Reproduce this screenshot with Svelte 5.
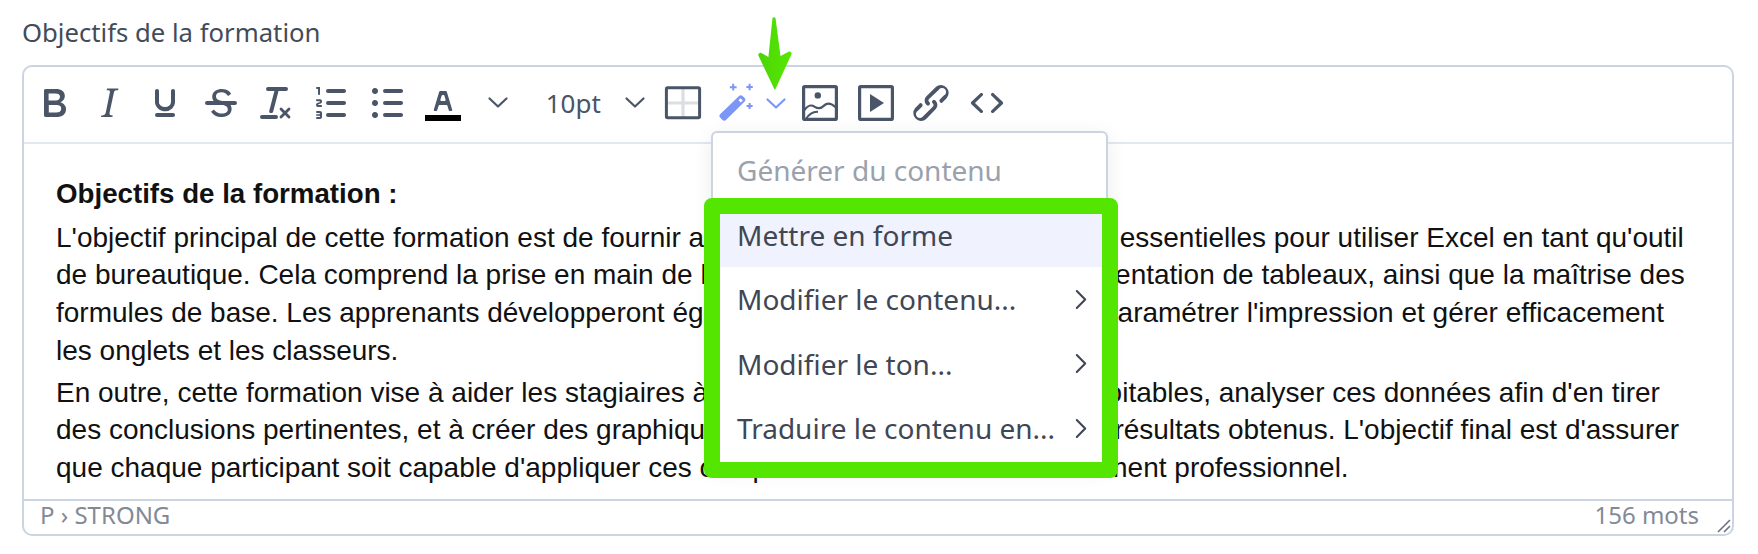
<script lang="ts">
	// icon paths on a 24 unit grid, shown at 48px like the editor's retina toolbar
	const icons: Record<string, string> = {
		bold: 'M7.8 19c-.3 0-.5 0-.6-.2l-.2-.5V5.7c0-.2 0-.4.2-.5l.6-.2h5c1.5 0 2.7.3 3.5 1 .7.6 1.1 1.4 1.1 2.5a3 3 0 0 1-.6 1.9c-.4.6-1 1-1.6 1.2.4.1.9.3 1.3.6s.8.7 1 1.2c.4.4.5 1 .5 1.6 0 1.3-.4 2.3-1.3 3-.8.7-2.1 1-3.8 1H7.8zm5-8.3c.6 0 1.2-.1 1.6-.5.4-.3.6-.7.6-1.3 0-1.1-.8-1.7-2.3-1.7H9.3v3.5h3.4zm.5 6c.7 0 1.3-.1 1.7-.4.4-.4.6-.9.6-1.5s-.2-1-.7-1.4c-.4-.3-1-.4-2-.4H9.4v3.8h4z',
		italic: 'M16.7 4.7l-.1.9h-.3c-.6 0-1 0-1.4.3-.3.3-.4.6-.5 1.1l-2.1 9.8v.6c0 .5.4.8 1.4.8h.2l-.2.8H8l.2-.8h.2c1.1 0 1.8-.5 2-1.5l2-9.8.1-.5c0-.6-.4-.8-1.4-.8h-.3l.2-.9h5.8z',
		underline: 'M16 5c.6 0 1 .4 1 1v5.5a4 4 0 0 1-.4 1.8l-1 1.4a5.3 5.3 0 0 1-5.5 1 5 5 0 0 1-1.6-1c-.5-.4-.8-.9-1.1-1.4a4 4 0 0 1-.4-1.8V6c0-.6.4-1 1-1s1 .4 1 1v5.5c0 .3 0 .6.2 1l.6.7a3.3 3.3 0 0 0 2.2.8 3.4 3.4 0 0 0 2.2-.8c.3-.2.4-.5.6-.8l.2-.9V6c0-.6.4-1 1-1zM8 17h8c.6 0 1 .4 1 1s-.4 1-1 1H8a1 1 0 0 1 0-2z',
		strike: 'M15.6 8.5c-.5-.7-1-1.1-1.3-1.3-.6-.4-1.3-.6-2-.6-2.7 0-2.8 1.7-2.8 2.1 0 1.6 1.8 2 3.2 2.3 4.4.9 4.6 2.8 4.6 3.9 0 1.4-.7 4.1-5 4.1A6.2 6.2 0 0 1 7 16.4l1.5-1.1c.4.6 1.6 2 3.7 2 1.6 0 2.5-.4 3-1.2.4-.8.3-2-.8-2.6-.7-.4-1.6-.7-2.9-1-1-.2-3.9-.8-3.9-3.6C7.6 6 10.3 5 12.4 5c2.9 0 4.2 1.6 4.7 2.4l-1.5 1.1zM5 11h14a1 1 0 0 1 0 2H5a1 1 0 0 1 0-2z',
		clear: 'M13.2 6a1 1 0 0 1 0 .2l-2.6 10a1 1 0 0 1-1 .8h-.2a.8.8 0 0 1-.8-1l2.6-10H8a1 1 0 1 1 0-2h9a1 1 0 0 1 0 2h-3.8zM5 18h7a1 1 0 0 1 0 2H5a1 1 0 0 1 0-2zm13 1.5L16.5 18 15 19.5a.7.7 0 0 1-1-1l1.5-1.5-1.5-1.5a.7.7 0 0 1 1-1l1.5 1.5 1.5-1.5a.7.7 0 0 1 1 1L17.5 17l1.5 1.5a.7.7 0 0 1-1 1z',
		ol: 'M10 17h8c.6 0 1 .4 1 1s-.4 1-1 1h-8a1 1 0 0 1 0-2zm0-6h8c.6 0 1 .4 1 1s-.4 1-1 1h-8a1 1 0 0 1 0-2zm0-6h8c.6 0 1 .4 1 1s-.4 1-1 1h-8a1 1 0 1 1 0-2zM6 4v3.5c0 .3-.2.5-.5.5a.5.5 0 0 1-.5-.5V5h-.5a.5.5 0 0 1 0-1H6zm-1 8.8l.2.2h1.3c.3 0 .5.2.5.5s-.2.5-.5.5H4.9a1 1 0 0 1-.9-1V13c0-.4.3-.8.6-1l1.2-.4.2-.3a.2.2 0 0 0-.2-.2H4.5a.5.5 0 0 1-.5-.5c0-.3.2-.5.5-.5h1.6c.5 0 .9.4.9 1v.1c0 .4-.3.8-.6 1l-1.2.4-.2.3zM7 17v2c0 .6-.4 1-1 1H4.5a.5.5 0 0 1 0-1h1.2c.2 0 .3-.1.3-.3 0-.2-.1-.3-.3-.3H4.4a.4.4 0 1 1 0-.8h1.3c.2 0 .3-.1.3-.3 0-.2-.1-.3-.3-.3H4.5a.5.5 0 1 1 0-1H6c.6 0 1 .4 1 1z',
		ul: 'M11 5h8c.6 0 1 .4 1 1s-.4 1-1 1h-8a1 1 0 0 1 0-2zm0 6h8c.6 0 1 .4 1 1s-.4 1-1 1h-8a1 1 0 0 1 0-2zm0 6h8c.6 0 1 .4 1 1s-.4 1-1 1h-8a1 1 0 0 1 0-2zM4.5 6c0-.4.1-.8.4-1 .3-.4.7-.5 1.1-.5.4 0 .8.1 1 .4.4.3.5.7.5 1.1 0 .4-.1.8-.4 1-.3.4-.7.5-1.1.5-.4 0-.8-.1-1-.4-.4-.3-.5-.7-.5-1.1zm0 6c0-.4.1-.8.4-1 .3-.4.7-.5 1.1-.5.4 0 .8.1 1 .4.4.3.5.7.5 1.1 0 .4-.1.8-.4 1-.3.4-.7.5-1.1.5-.4 0-.8-.1-1-.4-.4-.3-.5-.7-.5-1.1zm0 6c0-.4.1-.8.4-1 .3-.4.7-.5 1.1-.5.4 0 .8.1 1 .4.4.3.5.7.5 1.1 0 .4-.1.8-.4 1-.3.4-.7.5-1.1.5-.4 0-.8-.1-1-.4-.4-.3-.5-.7-.5-1.1z',
		color: 'M8.7 16h-.8a.5.5 0 0 1-.5-.6l2.7-9c.1-.3.3-.4.5-.4h2.8c.2 0 .4.1.5.4l2.7 9a.5.5 0 0 1-.5.6h-.8a.5.5 0 0 1-.4-.4l-.7-2.2c0-.3-.3-.4-.5-.4h-3.4c-.2 0-.4.1-.5.4l-.7 2.2c0 .3-.2.4-.4.4zm2.6-7.6l-.6 2a.5.5 0 0 0 .5.6h1.6a.5.5 0 0 0 .5-.6l-.6-2c0-.3-.3-.4-.5-.4h-.4c-.2 0-.4.1-.5.4z',
		link: 'M6.2 12.3a1 1 0 0 1 1.4 1.4l-2 2a2 2 0 1 0 2.6 2.8l4.8-4.8a1 1 0 0 0 0-1.4 1 1 0 1 1 1.4-1.3 2.9 2.9 0 0 1 0 4L9.6 20a3.9 3.9 0 0 1-5.5-5.5l2-2zm11.6-.6a1 1 0 0 1-1.4-1.4l2-2a2 2 0 1 0-2.6-2.8L11 10a1 1 0 0 0 0 1.4 1 1 0 1 1-1.4 1.3 2.9 2.9 0 0 1 0-4L14.4 4a3.9 3.9 0 0 1 5.5 5.5l-2 2z',
		code: 'M9.8 15.7c.3.3.3.8 0 1-.3.4-.9.4-1.2 0l-4.4-4.1a.8.8 0 0 1 0-1.2l4.4-4.2c.3-.3.9-.3 1.2 0 .3.3.3.8 0 1.1L6 12l3.8 3.7zm4.4 0c-.3.3-.3.8 0 1 .3.4.9.4 1.2 0l4.4-4.1a.8.8 0 0 0 0-1.2l-4.4-4.2a.8.8 0 0 0-1.2 0c-.3.3-.3.8 0 1.1L18 12l-3.8 3.7z'
	};

	const firstGroup = ['bold', 'italic', 'underline', 'strike', 'clear', 'ol', 'ul'];

	const menuItems = [
		{ label: 'Mettre en forme', sub: false, active: true },
		{ label: 'Modifier le contenu...', sub: true, active: false },
		{ label: 'Modifier le ton...', sub: true, active: false },
		{ label: 'Traduire le contenu en...', sub: true, active: false }
	];
</script>

{#snippet chevron()}
	<svg class="chev" viewBox="0 0 24 14" width="24" height="14" aria-hidden="true">
		<path d="M3.5 2.5 12 10.5l8.5-8" fill="none" stroke="currentColor" stroke-width="2.2" stroke-linecap="round" stroke-linejoin="round" />
	</svg>
{/snippet}

<div class="field">
	<div class="label">Objectifs de la formation</div>

	<div class="editor">
		<div class="toolbar">
			{#each firstGroup as name}
				<button class="tb" type="button">
					<svg viewBox="0 0 24 24" width="48" height="48"><path d={icons[name]} fill="currentColor" /></svg>
				</button>
			{/each}
			<button class="tb" type="button">
				<svg viewBox="0 0 24 24" width="48" height="48">
					<path d={icons.color} fill="currentColor" />
					<rect x="3" y="18" width="18" height="3" fill="#000" />
				</svg>
			</button>
			<button class="tb tb-chev" type="button">{@render chevron()}</button>

			<button class="tb size" type="button">
				<span>10pt</span>
				{@render chevron()}
			</button>

			<button class="tb tb-table" type="button">
				<svg viewBox="0 0 24 24" width="48" height="48">
					<path d="M12 5v14M4 12h16" stroke="#dcdee2" stroke-width="1.6" fill="none" />
					<rect x="3.7" y="4.4" width="16.6" height="15" rx=".6" fill="none" stroke="currentColor" stroke-width="1.5" />
				</svg>
			</button>

			<button class="tb tb-wand" type="button">
				<svg viewBox="0 0 24 24" width="48" height="48">
					<path d="M4.3 17.4 13.4 8.6a1.4 1.4 0 0 1 2 0l.8.8a1.4 1.4 0 0 1 0 2l-9.1 9a1.4 1.4 0 0 1-2 0l-.8-.9a1.4 1.4 0 0 1 0-2.1z" fill="#7b96f7" />
					<path d="M13.2 10.6l1-1 1.2 1.2-1 1z" fill="#fff" />
					<path d="M10.6 2.4v3.4M8.9 4.1h3.4M18.8 2.4v3.2M17.2 4h3.2M18.8 12v3M17.3 13.5h3" stroke="#7b96f7" stroke-width="1" fill="none" />
				</svg>
			</button>
			<button class="tb tb-chev-blue" type="button">{@render chevron()}</button>

			<button class="tb tb-image" type="button">
				<svg viewBox="0 0 24 24" width="48" height="48">
					<rect x="3.8" y="3.8" width="16.4" height="16.4" rx=".6" fill="none" stroke="currentColor" stroke-width="1.6" />
					<circle cx="10.9" cy="8.2" r="1.6" fill="currentColor" />
					<path d="M4.2 15.5c2-2.6 3.4-2.8 5.2-1.6 1.8 1.2 3 1 4.6-.6 1.6-1.6 3.4-1.4 5.8.8M5 20c1.6-2.6 3.4-3.8 6-3.6" fill="none" stroke="currentColor" stroke-width="1.1" />
				</svg>
			</button>
			<button class="tb" type="button">
				<svg viewBox="0 0 24 24" width="48" height="48">
					<rect x="3.8" y="3.8" width="16.4" height="16.4" rx=".6" fill="none" stroke="currentColor" stroke-width="1.6" />
					<path d="M9 7.5v9l7-4.5z" fill="currentColor" />
				</svg>
			</button>
			<button class="tb" type="button">
				<svg viewBox="0 0 24 24" width="48" height="48"><path d={icons.link} fill="currentColor" /></svg>
			</button>
			<button class="tb" type="button">
				<svg viewBox="0 0 24 24" width="48" height="48"><path d={icons.code} fill="currentColor" /></svg>
			</button>
		</div>

		<div class="content">
			<p><strong>Objectifs de la formation :</strong></p>
			<p class="main">
				L'objectif principal de cette formation est de fournir aux participants des compétences essentielles pour utiliser Excel en tant qu'outil<br />
				de bureautique. Cela comprend la prise en main de l'interface, la création puis la présentation de tableaux, ainsi que la maîtrise des<br />
				formules de base. Les apprenants développeront également des compétences pour paramétrer l'impression et gérer efficacement<br />
				les onglets et les classeurs.
			</p>
			<p class="main second">
				En outre, cette formation vise à aider les stagiaires à bien produire des données exploitables, analyser ces données afin d'en tirer<br />
				des conclusions pertinentes, et à créer des graphiques percutants pour présenter les résultats obtenus. L'objectif final est d'assurer<br />
				que chaque participant soit capable d'appliquer ces compétences dans un environnement professionnel.
			</p>
		</div>

		<div class="statusbar">
			<span>P › STRONG</span>
			<span class="words">156 mots</span>
			<svg class="grip" viewBox="0 0 16 16" width="16" height="16">
				<path d="M15 3 3 15M15 9l-6 6" stroke="#6b7280" stroke-width="1.6" fill="none" />
			</svg>
		</div>
	</div>

	<!-- dropdown du bouton IA -->
	<div class="menu">
		<div class="menu-title">Générer du contenu</div>
		{#each menuItems as item}
			<div class="menu-item" class:active={item.active}>
				<span>{item.label}</span>
				{#if item.sub}
					<svg viewBox="0 0 12 20" width="14" height="21">
						<path d="M2 2l8 8-8 8" fill="none" stroke="currentColor" stroke-width="2" stroke-linecap="round" stroke-linejoin="round" />
					</svg>
				{/if}
			</div>
		{/each}
	</div>

	<!-- annotation verte posée sur la capture -->
	<div class="highlight"></div>
	<svg class="arrow" viewBox="0 0 40 80" width="40" height="80">
		<defs>
			<linearGradient id="arrowfill" x1="0" x2="1" y1="0" y2="0">
				<stop offset="0" stop-color="#4bd40a" />
				<stop offset="1" stop-color="#58e800" />
			</linearGradient>
		</defs>
		<path d="M17.5 2c.4-1 2.6-1 3 0l5 38 8-4.2c2-.8 3.8 1.2 2.8 3L20.500 73c-.2.6-1 .6-1.200 0L3.600 40c-1-1.800.8-3.800 2.800-3l7 4z" fill="url(#arrowfill)" />
	</svg>
</div>

<style>
	:global(body) {
		margin: 0;
		background: #fff;
	}

	.field {
		position: relative;
		height: 554px;
		padding: 16px 24px 0 22px;
		box-sizing: border-box;
		font-family: 'Noto Sans', 'Open Sans', sans-serif;
	}

	.label {
		height: 33px;
		margin-bottom: 16px;
		font-size: 25.7px;
		line-height: 33px;
		color: #434b59;
	}

	.editor {
		height: 471px;
		box-sizing: border-box;
		border: 2px solid #cbd5e1;
		border-radius: 10px;
		display: flex;
		flex-direction: column;
		overflow: hidden;
		background: #fff;
	}

	.toolbar {
		flex: 0 0 77px;
		box-sizing: border-box;
		border-bottom: 2px solid #e2e8f0;
		display: flex;
		align-items: center;
		padding: 0 0 4px 2px;
		color: #4a5568;
	}

	.tb {
		flex: 0 0 55.6px;
		height: 48px;
		border: 0;
		background: none;
		padding: 0;
		margin: 0;
		color: inherit;
		font: inherit;
		display: flex;
		align-items: center;
		justify-content: center;
	}

	.tb svg {
		display: block;
	}

	.tb-chev {
		flex-basis: 55px;
	}

	.tb-chev-blue {
		flex-basis: 28px;
		color: #7b96f7;
		margin-top: 2px;
	}

	.size {
		flex-basis: 132px;
		gap: 22px;
		padding-left: 9px;
		font-size: 26px;
	}

	.tb-table {
		flex-basis: 50px;
	}

	.tb-wand {
		flex-basis: 52px;
		margin-left: 2.4px;
	}

	.tb-image {
		margin-left: 2px;
	}

	.content {
		flex: 1;
		padding: 31px 32px 0;
		font-family: 'Liberation Sans', Arial, sans-serif;
		font-size: 28px;
		line-height: 37.7px;
		color: #111;
		white-space: nowrap;
	}

	.content p {
		margin: 0;
	}

	.content strong {
		font-size: 27.7px;
	}

	.content .main {
		margin-top: 6px;
	}

	.content .second {
		margin-top: 4px;
	}

	.statusbar {
		flex: 0 0 35px;
		box-sizing: border-box;
		border-top: 2px solid #cbd5e1;
		display: flex;
		align-items: center;
		padding: 0 33px 5px 16px;
		font-size: 24px;
		line-height: 24px;
		color: #828a96;
		position: relative;
	}

	.words {
		margin-left: auto;
	}

	.grip {
		position: absolute;
		right: 1px;
		bottom: 1px;
	}

	.menu {
		position: absolute;
		left: 711px;
		top: 131px;
		width: 397px;
		box-sizing: border-box;
		padding-bottom: 6px;
		background: #fff;
		border: 2px solid #cbd5e1;
		border-radius: 6px;
		box-shadow: 0 4px 20px rgba(0, 0, 0, 0.08);
		overflow: hidden;
		color: #3f4755;
		font-size: 28px;
	}

	.menu-title {
		height: 70px;
		box-sizing: border-box;
		padding: 4px 0 0 24px;
		display: flex;
		align-items: center;
		color: #9aa1ac;
	}

	.menu-item {
		height: 64.3px;
		display: flex;
		align-items: center;
		justify-content: space-between;
		padding: 0 18px 0 24px;
	}

	.menu-item.active {
		background: #f0f3fe;
	}

	.highlight {
		position: absolute;
		left: 704px;
		top: 198px;
		width: 414px;
		height: 280px;
		box-sizing: border-box;
		border: 16px solid #54e600;
		border-radius: 8px;
	}

	.arrow {
		position: absolute;
		left: 755px;
		top: 16px;
	}
</style>
